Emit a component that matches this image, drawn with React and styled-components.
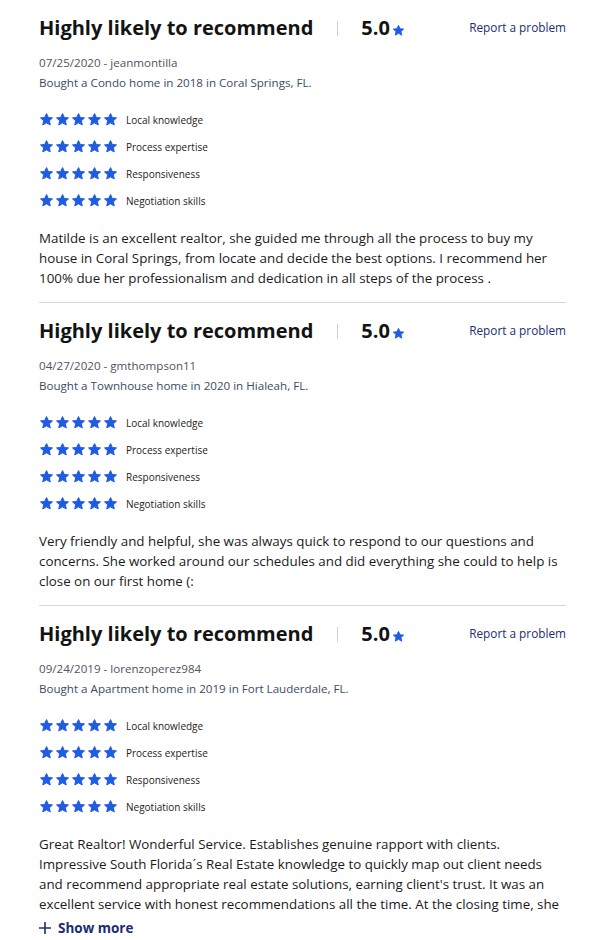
import React from 'react';
import styled, { createGlobalStyle } from 'styled-components';

const GlobalStyle = createGlobalStyle`
  html, body {
    margin: 0;
    padding: 0;
    background: #fff;
  }
  body {
    font-family: 'Open Sans', 'Noto Sans', Arial, sans-serif;
    color: #1a1a1a;
  }
`;

const Page = styled.div`
  padding: 0 34px 0 39px;
`;

const Review = styled.section`
  padding-top: 12px;
  border-bottom: ${(p) => (p.last ? 'none' : '1px solid #d6d6d6')};
  padding-bottom: ${(p) => (p.last ? '0' : '14px')};
`;

const Header = styled.div`
  display: flex;
  align-items: center;
  height: 30px;
`;

const Title = styled.h3`
  margin: 0;
  font-size: 20px;
  font-weight: 700;
  color: #131313;
`;

const Bar = styled.span`
  width: 1px;
  height: 15px;
  background: #cfcfcf;
  margin: 2px 23px 0 24px;
`;

const Score = styled.span`
  font-size: 20px;
  font-weight: 700;
  color: #131313;
`;

const ScoreStar = styled.span`
  display: inline-flex;
  margin: 6px 0 0 2px;
`;

const ReportLink = styled.a`
  margin-left: auto;
  font-size: 11.8px;
  color: #1b2d73;
  text-decoration: none;
  cursor: pointer;
`;

const Meta = styled.div`
  margin-top: ${(p) => p.gap || 0}px;
  font-size: 11.6px;
  line-height: 20px;
  color: ${(p) => p.color};
`;

const Ratings = styled.div`
  margin-top: 13px;
`;

const RatingRow = styled.div`
  display: flex;
  align-items: center;
  height: 27px;
`;

const Stars = styled.div`
  display: flex;
  gap: 1px;
  margin-right: 8px;
`;

const RatingLabel = styled.span`
  font-size: 10px;
  color: #222;
`;

const Body = styled.p`
  margin: 14px 0 0;
  font-size: 13.35px;
  line-height: 20px;
  color: #1a1a1a;
  ${(p) =>
    p.lines &&
    `
    max-height: ${p.lines * 20}px;
    overflow: hidden;
  `}
`;

const ShowMore = styled.button`
  display: flex;
  align-items: center;
  gap: 7px;
  margin-top: 5px;
  padding: 0;
  border: none;
  background: none;
  font-family: inherit;
  font-size: 13.5px;
  font-weight: 700;
  color: #1b2d73;
  cursor: pointer;
`;

const Star = ({ size = 15 }) => (
  <svg width={size} height={size} viewBox="0 0 24 24">
    <path
      d="M12 2.5l2.9 6.2 6.7.7-5 4.6 1.4 6.7L12 17.3l-6 3.4 1.4-6.7-5-4.6 6.7-.7z"
      fill="#1f5be3"
      stroke="#1f5be3"
      strokeWidth="1.6"
      strokeLinejoin="round"
    />
  </svg>
);

const Plus = () => (
  <svg width="12" height="12" viewBox="0 0 12 12">
    <path d="M6 0v12M0 6h12" stroke="#1b2d73" strokeWidth="1.6" />
  </svg>
);

const categories = ['Local knowledge', 'Process expertise', 'Responsiveness', 'Negotiation skills'];

const reviews = [
  {
    date: '07/25/2020',
    user: 'jeanmontilla',
    bought: 'Bought a Condo home in 2018 in Coral Springs, FL.',
    text:
      'Matilde is an excellent realtor, she guided me through all the process to buy my house in Coral Springs, from locate and decide the best options. I recommend her 100% due her professionalism and dedication in all steps of the process .'
  },
  {
    date: '04/27/2020',
    user: 'gmthompson11',
    bought: 'Bought a Townhouse home in 2020 in Hialeah, FL.',
    text:
      'Very friendly and helpful, she was always quick to respond to our questions and concerns. She worked around our schedules and did everything she could to help is close on our first home (:'
  },
  {
    date: '09/24/2019',
    user: 'lorenzoperez984',
    bought: 'Bought a Apartment home in 2019 in Fort Lauderdale, FL.',
    text:
      "Great Realtor! Wonderful Service. Establishes genuine rapport with clients. Impressive South Florida\u00b4s Real Estate knowledge to quickly map out client needs and recommend appropriate real estate solutions, earning client's trust. It was an excellent service with honest recommendations all the time. At the closing time, she was always there to make sure everything went smoothly.",
    lines: 4
  }
];

export default function App() {
  return (
    <Page>
      <GlobalStyle />
      {reviews.map((review, index) => {
        const last = index === reviews.length - 1;
        return (
          <Review key={review.user} last={last}>
            <Header>
              <Title>Highly likely to recommend</Title>
              <Bar />
              <Score>5.0</Score>
              <ScoreStar>
                <Star size={13} />
              </ScoreStar>
              <ReportLink>Report a problem</ReportLink>
            </Header>
            <Meta color="#50545c" gap={11}>
              {review.date} - {review.user}
            </Meta>
            <Meta color="#3d4b66">{review.bought}</Meta>
            <Ratings>
              {categories.map((c) => (
                <RatingRow key={c}>
                  <Stars>
                    {[0, 1, 2, 3, 4].map((i) => (
                      <Star key={i} />
                    ))}
                  </Stars>
                  <RatingLabel>{c}</RatingLabel>
                </RatingRow>
              ))}
            </Ratings>
            <Body lines={review.lines}>{review.text}</Body>
            {review.lines && (
              <ShowMore>
                <Plus />
                Show more
              </ShowMore>
            )}
          </Review>
        );
      })}
    </Page>
  );
}
